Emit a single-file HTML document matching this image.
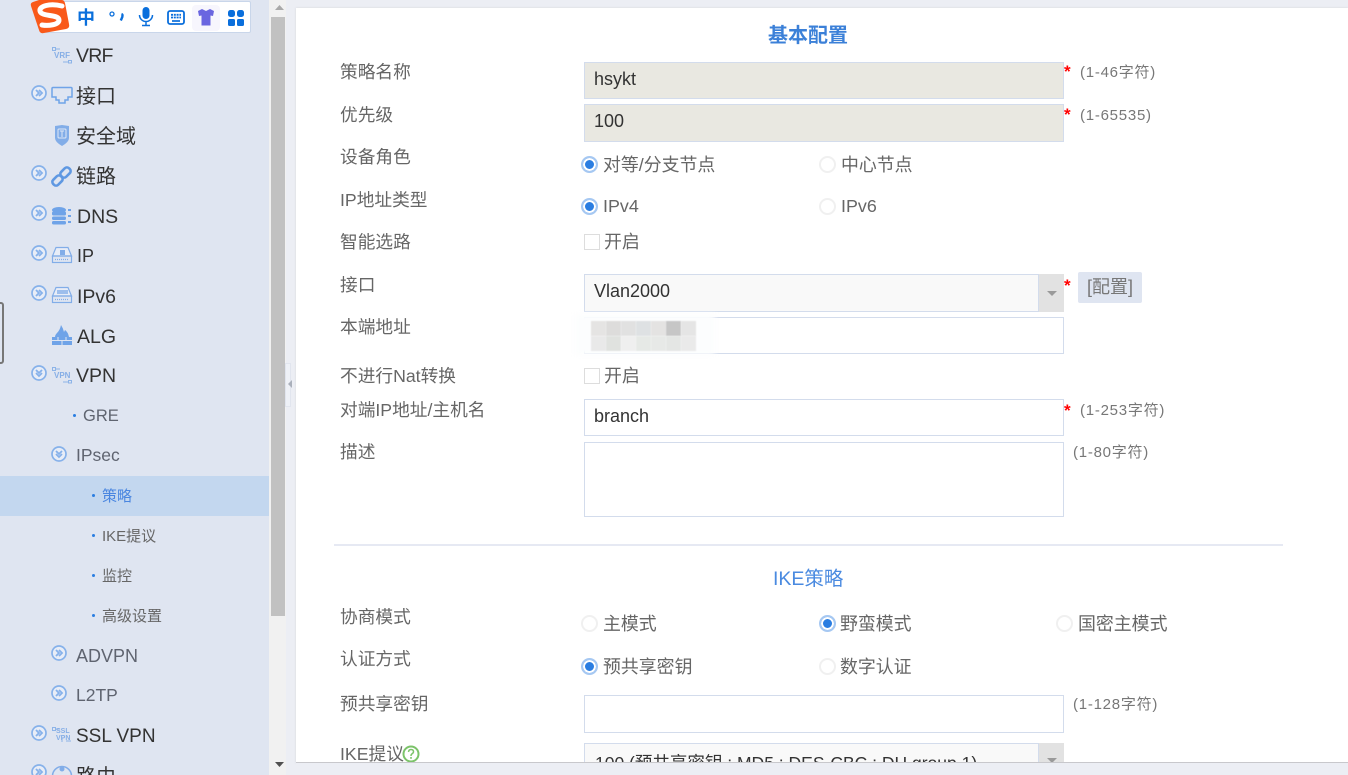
<!DOCTYPE html>
<html><head><meta charset="utf-8"><style>
*{box-sizing:border-box}
html,body{margin:0;padding:0;width:1348px;height:775px;overflow:hidden;background:#eceef4}
#w{position:relative;width:1348px;height:775px;overflow:hidden;background:#eceef4;font-family:"Liberation Sans","Noto Sans CJK SC",sans-serif;color:#666}
.a,.t,.n,.s,.l,.h,.v,.i,.r,.c,.star{position:absolute}
.t{white-space:nowrap;line-height:24px;height:24px}
.n{font-size:19.5px;color:#333;left:76px;line-height:24px;white-space:nowrap}
.n.g{color:#5f6470}
.s{font-size:15px;color:#666;left:102px;line-height:20px;white-space:nowrap}
.l{font-size:17.7px;color:#666;left:340px;line-height:24px;white-space:nowrap}
.h{font-size:15px;color:#777;line-height:20px;white-space:nowrap;letter-spacing:.75px}
.v{font-size:17.9px;color:#666;line-height:24px;white-space:nowrap}
.i{left:584px;width:480px;border:1px solid #d3dcec;background:#fff;font-size:18px;color:#333;line-height:33px;padding-left:9px;white-space:nowrap;overflow:hidden}
.i.d{background:#e9e8e1}
.r{width:17px;height:17px;border-radius:50%;border:2px solid #f0f0f0;background:#fff}
.r.on{border:2px solid #a6c8f2;background:#2a7de1;box-shadow:inset 0 0 0 2px #fff}
.c{width:16px;height:16px;border:1px solid #ddd;background:#fff;left:584px}
.star{color:#f00;font-size:17px;font-weight:bold;line-height:17px;left:1064px}
.b{position:absolute;width:3px;height:3px;border-radius:50%;background:#2a7de1}
.m{position:absolute;width:15px;height:15px;filter:blur(.6px)}
svg{position:absolute;overflow:visible}
</style></head><body><div id="w">

<!-- sidebar -->
<div class="a" style="left:0;top:0;width:269px;height:775px;background:#dfe5f1"></div>
<div class="a" style="left:0;top:476px;width:269px;height:40px;background:#c3d7ef"></div>

<!-- scrollbar -->
<div class="a" style="left:269px;top:0;width:17px;height:775px;background:#f1f1f1"></div>
<div class="a" style="left:271px;top:17px;width:14px;height:599px;background:#c1c1c1"></div>
<svg style="left:269px;top:0" width="17" height="775"><path d="M6 10 L10.500 5 L15 10Z" fill="#a9a9a9"/><path d="M6 762 L10.500 767 L15 762Z" fill="#505050"/></svg>

<!-- gap + content -->
<div class="a" style="left:286px;top:0;width:1062px;height:775px;background:#eceef4"></div>
<div class="a" style="left:296px;top:8px;width:1052px;height:755px;background:#fff;box-shadow:0 0 2px #d4d4d8"></div>
<div class="a" style="left:285px;top:363px;width:6px;height:44px;background:#eef1f7;border:1px solid #e1e5ee"></div>
<svg style="left:285px;top:363px" width="8" height="44"><path d="M7 17 L3 21 L7 25Z" fill="#aab0bb"/></svg>
<div class="a" style="left:-6px;top:302px;width:10px;height:62px;border:2px solid #777;border-radius:3px"></div>

<!-- sogou ime bar -->
<div class="a" style="left:45px;top:1px;width:206px;height:32px;background:#fff;border:1px solid #c9d6ea;border-radius:2px"></div>
<svg style="left:30px;top:0" width="40" height="34"><path d="M1 6 Q0 3 3 2 L9 0 L32 0 Q34 0 35 3 L39 24 Q40 28 36 29 L14 33 Q10 34 9 30Z" fill="#f9591a"/><path d="M32 6 C20 3 9 6 10 11 C11 17 29 14 29 20 C29 25 18 26 12 25" fill="none" stroke="#fff" stroke-width="5" stroke-linecap="round"/></svg>
<div class="a" style="left:77px;top:6px;font-size:18px;font-weight:bold;line-height:24px;color:#0a6fdc">中</div>
<svg style="left:108px;top:8px" width="18" height="18"><circle cx="4" cy="6" r="2" fill="none" stroke="#0a6fdc" stroke-width="1.300"/><path d="M13.500 6 q1.500 .5 .8 3 l-1.500 3.500" fill="none" stroke="#0a6fdc" stroke-width="2.400"/></svg>
<svg style="left:138px;top:7px" width="16" height="20"><rect x="4.500" y="0" width="7" height="12" rx="3.500" fill="#0a6fdc"/><path d="M1.500 8 a6.500 6.500 0 0 0 13 0 M8 14.500 V18 M4 18.500 H12" fill="none" stroke="#0a6fdc" stroke-width="1.500"/></svg>
<svg style="left:167px;top:10px" width="18" height="15"><rect x="1" y="1" width="16" height="13" rx="2" fill="none" stroke="#0a6fdc" stroke-width="1.800"/><path d="M4 4.800H14M4 7.500H14" stroke="#0a6fdc" stroke-width="1.800" stroke-dasharray="2 .8"/><path d="M5 11H13" stroke="#0a6fdc" stroke-width="1.700"/></svg>
<div class="a" style="left:192px;top:5px;width:28px;height:26px;background:#f7f6fd;border-radius:4px"></div>
<svg style="left:196px;top:9px" width="20" height="17"><path d="M6 0 L10 2 L14 0 L18 2 L17 7 L14.500 6.500 V16.500 H5.500 V6.500 L3 7 L2 2Z" fill="#6a66e0"/></svg>
<svg style="left:228px;top:10px" width="17" height="17"><rect x="0" y="0" width="7" height="7" rx="2.500" fill="#0a6fdc"/><rect x="9" y="0" width="7" height="7" rx="2.500" fill="#0a6fdc"/><rect x="0" y="9" width="7" height="7" rx="1.500" fill="#0a6fdc"/><rect x="9" y="9" width="7" height="7" rx="1.500" fill="#0a6fdc"/></svg>

<!-- tree -->
<svg style="left:0;top:0" width="269" height="775">
<defs>
<g id="ar"><circle cx="0" cy="0" r="7" fill="#e8edf7" stroke="#86b1ea" stroke-width="1.700"/><path d="M-3 -3 L0 0 L-3 3 M0 -3 L3 0 L0 3" fill="none" stroke="#86b1ea" stroke-width="1.800"/></g>
<g id="dn"><circle cx="0" cy="0" r="7" fill="#e8edf7" stroke="#86b1ea" stroke-width="1.700"/><path d="M-3 -3 L0 0 L3 -3 M-3 0 L0 3 L3 0" fill="none" stroke="#86b1ea" stroke-width="1.800"/></g>
</defs>
<use href="#ar" x="39" y="93"/><use href="#ar" x="39" y="173"/><use href="#ar" x="39" y="213"/><use href="#ar" x="39" y="253"/><use href="#ar" x="39" y="293"/><use href="#dn" x="39" y="373"/>
<use href="#dn" x="59" y="454"/><use href="#ar" x="59" y="653"/><use href="#ar" x="59" y="693"/><use href="#ar" x="39" y="733"/><use href="#ar" x="39" y="772"/>
<!-- vrf -->
<g fill="none" stroke="#8db4e8" stroke-width="1"><rect x="52.500" y="47.500" width="3" height="3"/><path d="M55 49 H60"/><rect x="68.500" y="60.500" width="3" height="2.500"/><path d="M63 62 H68"/></g>
<!-- 接口 -->
<path d="M53 87.500 H71 Q72 87.500 72 88.500 V97 H68 V100 H65 V103 H59 V100 H56 V97 H52 V88.500 Q52 87.500 53 87.500Z" fill="none" stroke="#6fa3e8" stroke-width="1.500"/>
<!-- shield -->
<path d="M55 126 L62 125 L69 126 V138 Q69 142 62 146 Q55 142 55 138Z" fill="#82ade8"/><rect x="58" y="129" width="8" height="9" rx="1" fill="none" stroke="#dfe8f6"/><path d="M60 131 H64 M62 131 V137" stroke="#dfe8f6"/>
<!-- link -->
<g fill="none" stroke="#5f98e2" stroke-width="2.600"><rect x="52" y="177" width="11" height="7" rx="3" transform="rotate(-45 57.500 180.500)"/><rect x="60" y="169" width="11" height="7" rx="3" transform="rotate(-45 65.500 172.500)"/></g>
<!-- dns -->
<g fill="#6fa3e8"><ellipse cx="59" cy="210" rx="7" ry="3"/><rect x="52" y="211.500" width="14" height="4" rx="1.500"/><rect x="52" y="216.500" width="14" height="3.500" rx="1.500"/><rect x="52" y="221" width="14" height="3.500" rx="1.500"/><rect x="68" y="209" width="3" height="2"/><rect x="68" y="215" width="3" height="2"/><rect x="68" y="221" width="3" height="2"/></g>
<!-- ip -->
<g fill="none" stroke="#82ade8" stroke-width="1.200"><path d="M56 247.500 H68 L71.500 256 H52.500Z" fill="#e8edf7"/><rect x="52.500" y="256" width="19" height="6.500"/><path d="M55 259.500 H69" stroke-dasharray="1 1"/><path d="M56 287.500 H68 L71.500 296 H52.500Z" fill="#e8edf7"/><rect x="52.500" y="296" width="19" height="6.500"/><path d="M55 299.500 H69" stroke-dasharray="1 1"/></g>
<rect x="60" y="250" width="5" height="5" fill="#82ade8"/><rect x="57" y="290" width="11" height="4" fill="#9dbeec"/>
<!-- alg -->
<path d="M61 325 Q60 330 57 333 Q55 335 55 337 H52 V345 H72 V337 H69 Q68 332 65 330 L64 332 Q63 328 61 325Z" fill="#6fa3e8"/><path d="M52 340.500 H72 M58 337 V340 M66 337 V340 M62 341 V345" stroke="#dfe5f1" stroke-width="1"/>
<!-- vpn -->
<g fill="none" stroke="#8db4e8" stroke-width="1"><rect x="52.500" y="367.500" width="3" height="3"/><path d="M55 369 H60"/><rect x="68.500" y="380.500" width="3" height="2.500"/><path d="M63 382 H68"/></g>
<!-- ssl -->
<g fill="none" stroke="#8db4e8" stroke-width="1"><rect x="52.500" y="727.500" width="3" height="3"/><path d="M56 729 H60 M66 741 H71 M62 738 V742"/></g>
<!-- route -->
<circle cx="62" cy="776" r="9.500" fill="none" stroke="#82ade8" stroke-width="1.500"/><circle cx="62" cy="769" r="2.500" fill="#82ade8"/>
</svg>
<div class="a" style="left:54px;top:51px;font-size:8px;line-height:9px;color:#86aee6;font-weight:bold">VRF</div>
<div class="a" style="left:54px;top:371px;font-size:8px;line-height:9px;color:#86aee6;font-weight:bold">VPN</div>
<div class="a" style="left:56px;top:728px;font-size:7px;line-height:7px;color:#86aee6;font-weight:bold">SSL<br>VPN</div>

<div class="n" style="top:44px;letter-spacing:-.8px">VRF</div>
<div class="n" style="top:85px;font-size:20px">接口</div>
<div class="n" style="top:125px;font-size:20px">安全域</div>
<div class="n" style="top:165px;font-size:20px">链路</div>
<div class="n" style="top:205px;left:77px">DNS</div>
<div class="n" style="top:244px;left:77px;font-size:18px">IP</div>
<div class="n" style="top:285px;left:77px">IPv6</div>
<div class="n" style="top:325px;left:77px">ALG</div>
<div class="n" style="top:364px">VPN</div>
<div class="n g" style="top:404px;left:83px;font-size:16.500px">GRE</div>
<div class="n g" style="top:443px;font-size:17.500px">IPsec</div>
<div class="b" style="left:73px;top:414px"></div>
<div class="b" style="left:92px;top:494px"></div>
<div class="b" style="left:92px;top:534px"></div>
<div class="b" style="left:92px;top:574px"></div>
<div class="b" style="left:92px;top:614px"></div>
<div class="s" style="top:487px;color:#4a86e0">策略</div>
<div class="s" style="top:527px">IKE提议</div>
<div class="s" style="top:567px">监控</div>
<div class="s" style="top:607px">高级设置</div>
<div class="n g" style="top:644px;font-size:18px">ADVPN</div>
<div class="n g" style="top:683px;font-size:17.500px">L2TP</div>
<div class="n" style="top:725px;font-size:19px">SSL VPN</div>
<div class="n" style="top:765px;font-size:20px">路由</div>

<!-- form titles -->
<div class="t" style="left:768px;top:24px;font-size:20px;font-weight:bold;color:#3b80d8">基本配置</div>
<div class="a" style="left:334px;top:544px;width:949px;height:2px;background:#e6e9f3"></div>
<div class="t" style="left:773px;top:567px;font-size:19.500px;color:#4a8ae0">IKE策略</div>

<!-- labels -->
<div class="l" style="top:60px">策略名称</div>
<div class="l" style="top:103px">优先级</div>
<div class="l" style="top:145px">设备角色</div>
<div class="l" style="top:188px">IP地址类型</div>
<div class="l" style="top:230px">智能选路</div>
<div class="l" style="top:273px">接口</div>
<div class="l" style="top:315px">本端地址</div>
<div class="l" style="top:364px">不进行Nat转换</div>
<div class="l" style="top:398px">对端IP地址/主机名</div>
<div class="l" style="top:440px">描述</div>
<div class="l" style="top:605px">协商模式</div>
<div class="l" style="top:647px">认证方式</div>
<div class="l" style="top:692px">预共享密钥</div>
<div class="l" style="top:742px">IKE提议</div>
<svg style="left:402px;top:745px" width="18" height="18"><circle cx="9" cy="9" r="7.500" fill="#fff" stroke="#7cc36a" stroke-width="2"/><path d="M6.500 7 Q6.800 4.500 9 4.500 Q11.500 4.500 11.500 6.800 Q11.500 8 9.800 9 Q9 9.500 9 11" fill="none" stroke="#7cc36a" stroke-width="1.500"/><rect x="8.200" y="12" width="1.600" height="1.800" fill="#7cc36a"/></svg>

<!-- inputs -->
<div class="i d" style="top:62px;height:37px">hsykt</div>
<div class="i d" style="top:104px;height:38px">100</div>
<div class="i" style="top:274px;width:455px;height:38px;background:#f9f9f9;line-height:33px">Vlan2000</div>
<div class="a" style="left:1039px;top:274px;width:25px;height:38px;background:#e2e2e2"></div>
<svg style="left:1039px;top:274px" width="25" height="38"><path d="M8 17 H18 L13 22Z" fill="#9a9a9a"/></svg>
<div class="a" style="left:1078px;top:272px;width:64px;height:31px;background:#dfe5f1;border-radius:2px;font-size:18px;line-height:30px;color:#777;padding-left:9px;white-space:nowrap">[配置]</div>
<div class="i" style="top:317px;height:37px"></div>
<div class="i" style="top:399px;height:37px">branch</div>
<div class="i" style="top:442px;height:75px"></div>
<div class="i" style="top:695px;height:38px"></div>
<div class="i" style="top:743px;width:455px;height:38px;background:#f9f9f9;line-height:38px;font-size:17.500px;padding-left:10px">100 (预共享密钥 ; MD5 ; DES-CBC ; DH group 1)</div>
<div class="a" style="left:1039px;top:743px;width:25px;height:38px;background:#e2e2e2"></div>
<svg style="left:1039px;top:743px" width="25" height="38"><path d="M8 15 H18 L13 20Z" fill="#9a9a9a"/></svg>

<!-- blurred mask -->
<div class="a" style="left:575px;top:314px;width:140px;height:41px;background:#fcfdfe;filter:blur(3px)"></div>
<div class="m" style="left:591px;top:321px;background:#e5e4e3"></div>
<div class="m" style="left:606px;top:321px;background:#dddcdb"></div>
<div class="m" style="left:621px;top:321px;background:#e1e1e1"></div>
<div class="m" style="left:636px;top:321px;background:#dee1e3"></div>
<div class="m" style="left:651px;top:321px;background:#e4e3e2"></div>
<div class="m" style="left:666px;top:321px;background:#c6c6c6"></div>
<div class="m" style="left:681px;top:321px;background:#e5e5e5"></div>
<div class="m" style="left:591px;top:336px;background:#e9e9e9"></div>
<div class="m" style="left:606px;top:336px;background:#e0e2df"></div>
<div class="m" style="left:621px;top:336px;background:#efefef"></div>
<div class="m" style="left:636px;top:336px;background:#e6e9e6"></div>
<div class="m" style="left:651px;top:336px;background:#e7e9e7"></div>
<div class="m" style="left:666px;top:336px;background:#e4e6e4"></div>
<div class="m" style="left:681px;top:336px;background:#eaeaea"></div>

<!-- stars -->
<div class="star" style="top:63px">*</div>
<div class="star" style="top:106px">*</div>
<div class="star" style="top:277px">*</div>
<div class="star" style="top:402px">*</div>

<!-- hints -->
<div class="h" style="left:1080px;top:63px">(1-46字符)</div>
<div class="h" style="left:1080px;top:106px">(1-65535)</div>
<div class="h" style="left:1080px;top:401px">(1-253字符)</div>
<div class="h" style="left:1073px;top:443px">(1-80字符)</div>
<div class="h" style="left:1073px;top:695px">(1-128字符)</div>

<!-- radios -->
<div class="r on" style="left:581px;top:156px"></div><div class="v" style="left:603px;top:153px">对等/分支节点</div>
<div class="r" style="left:819px;top:156px"></div><div class="v" style="left:841px;top:153px">中心节点</div>
<div class="r on" style="left:581px;top:198px"></div><div class="v" style="left:603px;top:194px">IPv4</div>
<div class="r" style="left:819px;top:198px"></div><div class="v" style="left:841px;top:194px">IPv6</div>
<div class="c" style="top:234px"></div><div class="v" style="left:604px;top:230px">开启</div>
<div class="c" style="top:368px"></div><div class="v" style="left:604px;top:364px">开启</div>
<div class="r" style="left:581px;top:615px"></div><div class="v" style="left:603px;top:612px">主模式</div>
<div class="r on" style="left:819px;top:615px"></div><div class="v" style="left:840px;top:612px">野蛮模式</div>
<div class="r" style="left:1056px;top:615px"></div><div class="v" style="left:1078px;top:612px">国密主模式</div>
<div class="r on" style="left:581px;top:658px"></div><div class="v" style="left:603px;top:655px">预共享密钥</div>
<div class="r" style="left:819px;top:658px"></div><div class="v" style="left:840px;top:655px">数字认证</div>

<!-- bottom strip -->
<div class="a" style="left:296px;top:762px;width:1052px;height:13px;background:#eceef4;border-top:1px solid #c8c8cc"></div>
</div></body></html>
